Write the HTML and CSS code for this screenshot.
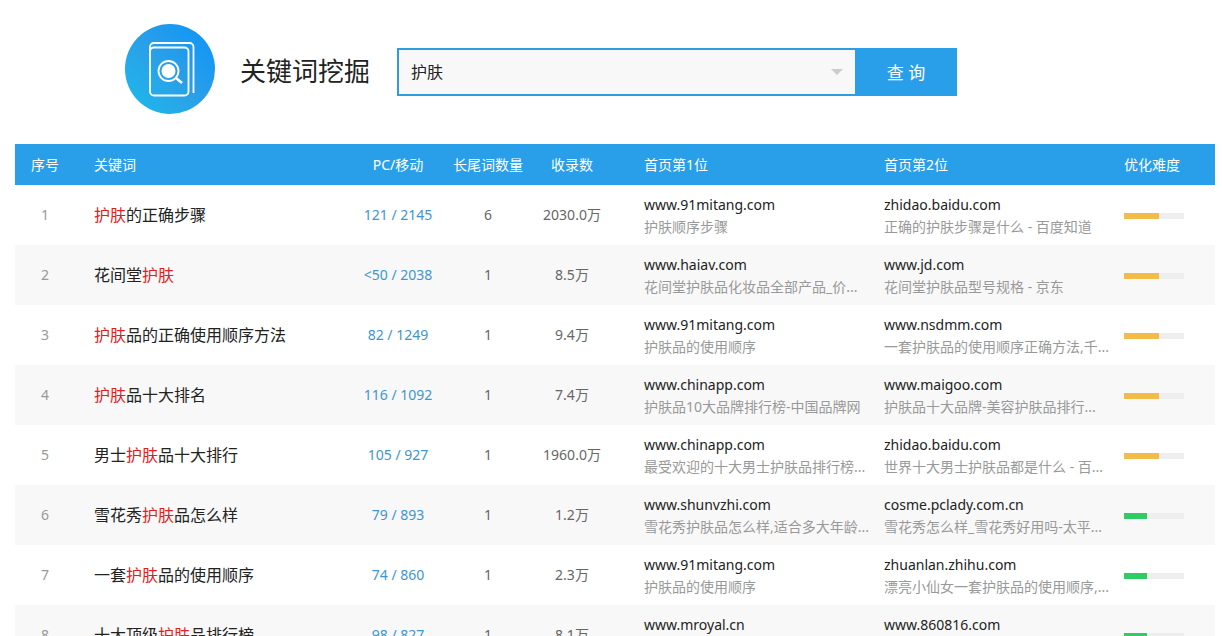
FILE: index.html
```html
<!DOCTYPE html>
<html lang="zh-CN">
<head>
    <meta charset="UTF-8">
    <meta name="viewport" content="width=device-width, initial-scale=1.0">
    <title>关键词挖掘</title>
    <link rel="stylesheet" href="styles.css">
</head>
<body>
    <header class="header">
        <svg class="logo" viewBox="0 0 90 90" aria-hidden="true">
            <defs>
                <linearGradient id="logo-bg" x1="0" y1="1" x2="1" y2="0">
                    <stop offset="0.1" stop-color="#1fb6ea"/>
                    <stop offset="0.5" stop-color="#2a9fe8"/>
                    <stop offset="0.9" stop-color="#1196f5"/>
                </linearGradient>
            </defs>
            <circle cx="45" cy="45" r="45" fill="url(#logo-bg)"/>
            <g fill="none" stroke="#fff" stroke-width="1.8">
                <rect x="25" y="23.500" width="38.500" height="48" rx="4"/>
                <path d="M25 28v-5a4 4 0 0 1 4-4h35.500a4 4 0 0 1 4 4V69"/>
                <circle cx="43.500" cy="47" r="10"/>
                <path d="M51 54l6 5" stroke-width="2.600"/>
            </g>
            <circle cx="43.500" cy="47" r="7" fill="#fff"/>
        </svg>
        <form class="search" id="search-form">
            <h1>关键词挖掘</h1>
            <div class="search-box">
                <input type="text" id="keyword" class="search-input" value="护肤" aria-label="关键词" autocomplete="off">
                <button type="button" class="search-toggle" aria-label="历史记录"></button>
            </div>
            <button type="submit" class="search-btn">查 询</button>
        </form>
    </header>
    <main class="result">
        <table class="result-table">
            <thead>
                <tr>
                    <th class="col-no">序号</th>
                    <th class="col-word">关键词</th>
                    <th class="col-num">PC/移动</th>
                    <th class="col-num">长尾词数量</th>
                    <th class="col-index">收录数</th>
                    <th class="col-site">首页第1位</th>
                    <th class="col-site">首页第2位</th>
                    <th class="col-level">优化难度</th>
                </tr>
            </thead>
            <tbody>
                <tr>
                    <td class="col-no">1</td>
                    <td class="col-word"><em>护肤</em>的正确步骤</td>
                    <td class="col-num"><a href="#">121 / 2145</a></td>
                    <td class="col-num">6</td>
                    <td class="col-index">2030.0万</td>
                    <td class="col-site"><a href="#">www.91mitang.com</a><p>护肤顺序步骤</p></td>
                    <td class="col-site"><a href="#">zhidao.baidu.com</a><p>正确的护肤步骤是什么 - 百度知道</p></td>
                    <td class="col-level"><div class="level"><div class="level-bar mid" style="width: 58%"></div></div></td>
                </tr>
                <tr>
                    <td class="col-no">2</td>
                    <td class="col-word">花间堂<em>护肤</em></td>
                    <td class="col-num"><a href="#">&lt;50 / 2038</a></td>
                    <td class="col-num">1</td>
                    <td class="col-index">8.5万</td>
                    <td class="col-site"><a href="#">www.haiav.com</a><p>花间堂护肤品化妆品全部产品_价...</p></td>
                    <td class="col-site"><a href="#">www.jd.com</a><p>花间堂护肤品型号规格 - 京东</p></td>
                    <td class="col-level"><div class="level"><div class="level-bar mid" style="width: 58%"></div></div></td>
                </tr>
                <tr>
                    <td class="col-no">3</td>
                    <td class="col-word"><em>护肤</em>品的正确使用顺序方法</td>
                    <td class="col-num"><a href="#">82 / 1249</a></td>
                    <td class="col-num">1</td>
                    <td class="col-index">9.4万</td>
                    <td class="col-site"><a href="#">www.91mitang.com</a><p>护肤品的使用顺序</p></td>
                    <td class="col-site"><a href="#">www.nsdmm.com</a><p>一套护肤品的使用顺序正确方法,千...</p></td>
                    <td class="col-level"><div class="level"><div class="level-bar mid" style="width: 58%"></div></div></td>
                </tr>
                <tr>
                    <td class="col-no">4</td>
                    <td class="col-word"><em>护肤</em>品十大排名</td>
                    <td class="col-num"><a href="#">116 / 1092</a></td>
                    <td class="col-num">1</td>
                    <td class="col-index">7.4万</td>
                    <td class="col-site"><a href="#">www.chinapp.com</a><p>护肤品10大品牌排行榜-中国品牌网</p></td>
                    <td class="col-site"><a href="#">www.maigoo.com</a><p>护肤品十大品牌-美容护肤品排行...</p></td>
                    <td class="col-level"><div class="level"><div class="level-bar mid" style="width: 58%"></div></div></td>
                </tr>
                <tr>
                    <td class="col-no">5</td>
                    <td class="col-word">男士<em>护肤</em>品十大排行</td>
                    <td class="col-num"><a href="#">105 / 927</a></td>
                    <td class="col-num">1</td>
                    <td class="col-index">1960.0万</td>
                    <td class="col-site"><a href="#">www.chinapp.com</a><p>最受欢迎的十大男士护肤品排行榜...</p></td>
                    <td class="col-site"><a href="#">zhidao.baidu.com</a><p>世界十大男士护肤品都是什么 - 百...</p></td>
                    <td class="col-level"><div class="level"><div class="level-bar mid" style="width: 58%"></div></div></td>
                </tr>
                <tr>
                    <td class="col-no">6</td>
                    <td class="col-word">雪花秀<em>护肤</em>品怎么样</td>
                    <td class="col-num"><a href="#">79 / 893</a></td>
                    <td class="col-num">1</td>
                    <td class="col-index">1.2万</td>
                    <td class="col-site"><a href="#">www.shunvzhi.com</a><p>雪花秀护肤品怎么样,适合多大年龄...</p></td>
                    <td class="col-site"><a href="#">cosme.pclady.com.cn</a><p>雪花秀怎么样_雪花秀好用吗-太平...</p></td>
                    <td class="col-level"><div class="level"><div class="level-bar low" style="width: 38%"></div></div></td>
                </tr>
                <tr>
                    <td class="col-no">7</td>
                    <td class="col-word">一套<em>护肤</em>品的使用顺序</td>
                    <td class="col-num"><a href="#">74 / 860</a></td>
                    <td class="col-num">1</td>
                    <td class="col-index">2.3万</td>
                    <td class="col-site"><a href="#">www.91mitang.com</a><p>护肤品的使用顺序</p></td>
                    <td class="col-site"><a href="#">zhuanlan.zhihu.com</a><p>漂亮小仙女一套护肤品的使用顺序,...</p></td>
                    <td class="col-level"><div class="level"><div class="level-bar low" style="width: 38%"></div></div></td>
                </tr>
                <tr>
                    <td class="col-no">8</td>
                    <td class="col-word">十大顶级<em>护肤</em>品排行榜</td>
                    <td class="col-num"><a href="#">98 / 827</a></td>
                    <td class="col-num">1</td>
                    <td class="col-index">8.1万</td>
                    <td class="col-site"><a href="#">www.mroyal.cn</a><p></p></td>
                    <td class="col-site"><a href="#">www.860816.com</a><p></p></td>
                    <td class="col-level"><div class="level"><div class="level-bar low" style="width: 38%"></div></div></td>
                </tr>
            </tbody>
        </table>
    </main>
</body>
</html>
```
FILE: styles.css
```css
* {
    box-sizing: border-box;
}
body {
    margin: 0;
    font-family: "Noto Sans", "Noto Sans CJK SC", sans-serif;
    font-size: 14px;
    color: #222;
    background-color: #fff;
}
a {
    text-decoration: none;
}

/* header */
.header {
    display: flex;
    align-items: center;
    padding: 24px 20px 30px 125px;
}
.logo {
    width: 90px;
    height: 90px;
    margin-right: 25px;
}
.search {
    display: flex;
    align-items: center;
    padding-top: 6px;
}
h1 {
    margin: 0 27px 0 0;
    padding-bottom: 2px;
    font-size: 26px;
    font-weight: normal;
    line-height: 40px;
    white-space: nowrap;
}
.search-box {
    display: flex;
    align-items: center;
    width: 458px;
    height: 48px;
    border: 2px solid #2e9cdf;
    border-right: none;
    background-color: #f8f8f8;
}
.search-input {
    flex: 1;
    min-width: 0;
    height: 100%;
    padding: 0 12px 2px;
    border: none;
    outline: none;
    background: transparent;
    font-family: inherit;
    font-size: 16px;
    color: #222;
}
.search-toggle {
    display: flex;
    justify-content: center;
    align-items: center;
    width: 36px;
    height: 100%;
    padding: 0;
    border: none;
    background: transparent;
    cursor: pointer;
}
.search-toggle::before {
    content: '';
    border: 6px solid transparent;
    border-top-color: #ccc;
    border-bottom: none;
}
.search-btn {
    width: 102px;
    height: 48px;
    padding: 0 0 2px;
    border: none;
    background-color: #2a9fe9;
    font-family: inherit;
    font-size: 17px;
    color: #fff;
    cursor: pointer;
}

/* result table */
.result {
    padding: 0 7px 0 15px;
}
.result-table {
    width: 100%;
    border-collapse: collapse;
    table-layout: fixed;
}
th, td {
    padding: 0 0 2px;
    text-align: center;
    white-space: nowrap;
}
th {
    height: 41px;
    background-color: #2a9fe9;
    font-weight: normal;
    color: #fff;
}
td {
    height: 60px;
    color: #666;
}
tbody tr:nth-child(even) {
    background-color: #f8f8f8;
}
.col-no {
    width: 60px;
}
td.col-no {
    color: #999;
}
.col-word {
    padding-left: 19px;
    text-align: left;
}
td.col-word {
    font-size: 16px;
    color: #222;
}
.col-word em {
    font-style: normal;
    color: #e02020;
}
.col-num {
    width: 90px;
}
.col-num a {
    color: #3c96d2;
}
.col-index {
    width: 96px;
    padding-right: 18px;
}
.col-site {
    width: 240px;
    padding-left: 15px;
    text-align: left;
}
.col-site a {
    display: block;
    line-height: 22px;
    color: #222;
}
.col-site p {
    height: 22px;
    margin: 0;
    line-height: 22px;
    color: #999;
}
.col-level {
    width: 106px;
    padding-left: 15px;
    text-align: left;
}
td.col-site, td.col-level {
    padding-top: 2px;
    padding-bottom: 0;
}
.level {
    width: 60px;
    height: 6px;
    background-color: #eee;
}
.level-bar {
    height: 100%;
}
.level-bar.mid {
    background-color: #f3bb48;
}
.level-bar.low {
    background-color: #2dcd64;
}
```
